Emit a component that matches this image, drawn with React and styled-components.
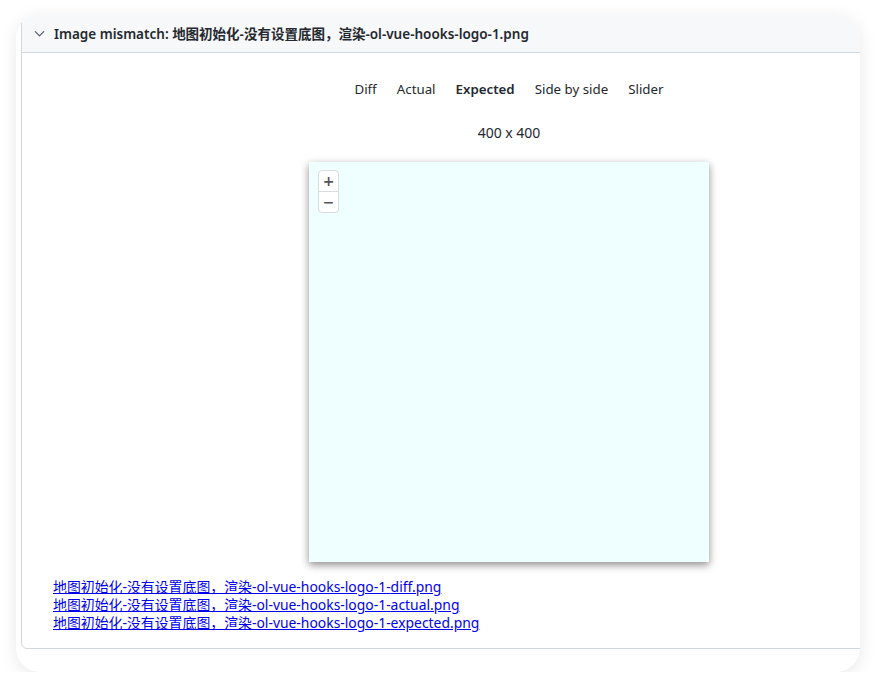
import React from 'react';
import styled, { createGlobalStyle } from 'styled-components';

const GlobalStyle = createGlobalStyle`
    html, body {
        margin: 0;
        padding: 0;
        background: #ffffff;
    }
    body {
        font-family: "Noto Sans", "Noto Sans CJK SC", sans-serif;
        color: #24292f;
    }
`

const tabs = ['Diff', 'Actual', 'Expected', 'Side by side', 'Slider'];
const base = '地图初始化-没有设置底图，渲染-ol-vue-hooks-logo-1';
const files = ['diff', 'actual', 'expected'];

function App() {
    return (
        <Page>
            <GlobalStyle />
            <Card>
                <Section>
                    <Header>
                        <Chevron viewBox="0 0 16 16">
                            <path d="M3.5 6l4.5 4.5 4.5-4.5" fill="none" stroke="#57606a" strokeWidth="1.4" strokeLinecap="round" strokeLinejoin="round" />
                        </Chevron>
                        <Title>Image mismatch: {base}.png</Title>
                    </Header>
                    <Body>
                        <Tabs>
                            {tabs.map(t => (
                                <Tab key={t} $active={t === 'Expected'}>{t}</Tab>
                            ))}
                        </Tabs>
                        <Size>400 x 400</Size>
                        <Shot>
                            <ZoomControls>
                                <ZoomButton>+</ZoomButton>
                                <ZoomButton $bottom>−</ZoomButton>
                            </ZoomControls>
                        </Shot>
                        <Links>
                            {files.map(f => (
                                <Link key={f} href="#">{base}-{f}.png</Link>
                            ))}
                        </Links>
                    </Body>
                </Section>
            </Card>
        </Page>
    )
}

export default App;

const Page = styled.div`
    padding: 14px 0 0 16px;
`

const Card = styled.div`
    width: 844px;
    height: 658px;
    border-radius: 24px;
    background: #ffffff;
    box-shadow: 0 4px 18px rgba(0, 0, 0, 0.09);
    overflow: hidden;
`

const Section = styled.div`
    margin-left: 5px;
    margin-top: -1px;
    width: 974px;
    border: 1px solid #d0d7de;
    border-radius: 6px;
    background: #ffffff;
`

const Header = styled.div`
    display: flex;
    align-items: center;
    height: 38px;
    padding-left: 10px;
    background: #f6f8fa;
    border-bottom: 1px solid #d0d7de;
    border-radius: 6px 6px 0 0;
`

const Chevron = styled.svg`
    width: 15px;
    height: 15px;
    margin-right: 7px;
`

const Title = styled.div`
    font-size: 13.5px;
    font-weight: 600;
    color: #24292f;
`

const Body = styled.div`
    display: flex;
    flex-direction: column;
    align-items: center;
    padding: 22px 0 16px;
`

const Tabs = styled.div`
    display: flex;
    gap: 20px;
    height: 28px;
    align-items: center;
`

const Tab = styled.div`
    font-size: 13.3px;
    font-weight: ${p => (p.$active ? 600 : 400)};
    color: #24292f;
`

const Size = styled.div`
    margin-top: 21px;
    font-size: 14px;
    line-height: 18px;
`

const Shot = styled.div`
    position: relative;
    margin-top: 20px;
    width: 400px;
    height: 400px;
    background: #effefe;
    box-shadow: 0 3px 8px rgba(0, 0, 0, 0.45);
`

const ZoomControls = styled.div`
    position: absolute;
    top: 8px;
    left: 9px;
    display: flex;
    flex-direction: column;
    border: 1px solid #d8dcdf;
    border-radius: 4px;
    background: #ffffff;
`

const ZoomButton = styled.div`
    width: 19px;
    height: 20px;
    display: flex;
    align-items: center;
    justify-content: center;
    font-family: "DejaVu Sans", sans-serif;
    font-size: 14px;
    font-weight: 700;
    color: #555;
    border-top: ${p => (p.$bottom ? '1px solid #d8dcdf' : 'none')};
`

const Links = styled.div`
    align-self: flex-start;
    display: flex;
    flex-direction: column;
    margin-top: 16px;
    padding-left: 31px;
`

const Link = styled.a`
    font-size: 13.9px;
    line-height: 18px;
    color: #0000ee;
    text-decoration: underline;
`
